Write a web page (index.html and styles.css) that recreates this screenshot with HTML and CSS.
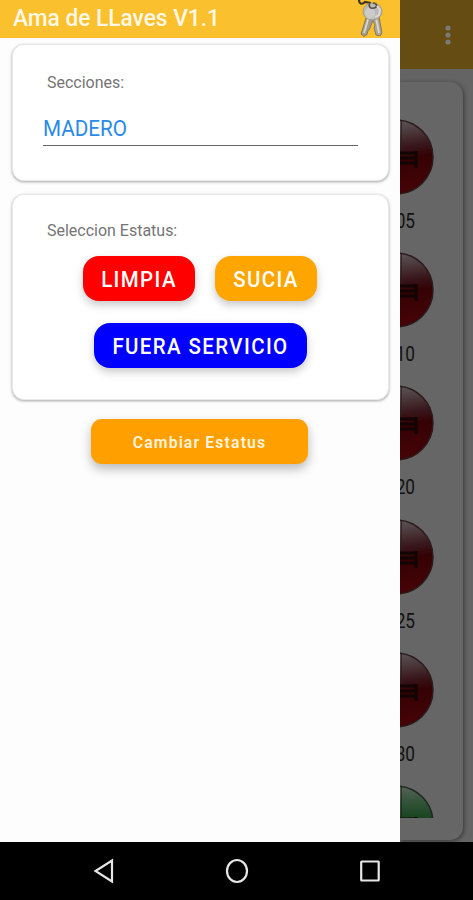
FILE: index.html
```html
<!DOCTYPE html>
<html lang="es">
<head>
    <meta charset="UTF-8">
    <meta name="viewport" content="width=device-width, initial-scale=1.0">
    <title>Ama de LLaves</title>
    <link rel="stylesheet" href="styles.css">
</head>
<body>
    <!-- Shared shapes for the room buttons -->
    <svg class="defs" width="0" height="0">
        <defs>
            <linearGradient id="red" x1="0" y1="0" x2="0.15" y2="1">
                <stop offset="0" stop-color="#686264"/>
                <stop offset="0.2" stop-color="#514245"/>
                <stop offset="0.45" stop-color="#38161a"/>
                <stop offset="0.6" stop-color="#340204"/>
                <stop offset="1" stop-color="#440306"/>
            </linearGradient>
            <linearGradient id="green" x1="0" y1="0" x2="0" y2="1">
                <stop offset="0" stop-color="#59625b"/>
                <stop offset="0.2" stop-color="#34553a"/>
                <stop offset="0.42" stop-color="#1a4422"/>
            </linearGradient>
            <g id="bed">
                <path d="M43.500 2v30" stroke="#2c2022" stroke-width="0.800"/>
                <path d="M24 34h35M24 39h33M24 44h35M58 32v17" stroke="#120304" stroke-width="3.200" fill="none"/>
            </g>
        </defs>
    </svg>

    <div class="screen">
        <div class="main">
            <div class="drawer">
                <div class="header">
                    <h1>Ama de LLaves V1.1</h1>
                    <svg class="keys" width="28" height="38" viewBox="0 0 28 38">
                        <path d="M1 0c0 4 3 5 6 2l6 1" fill="none" stroke="#3a3426" stroke-width="2.200"/>
                        <path d="M9 15L3 34l3 2.500 3-2 1-4 1.500-1 4-11z" fill="#a19c91" stroke="#7d6d46" stroke-width="0.800"/>
                        <path d="M15 16v5l2 4-1 3 2 7 4 1 2-3-3-17z" fill="#aaa59a" stroke="#7d6d46" stroke-width="0.800"/>
                        <path d="M10.500 18L6 33M18 18l3 15" stroke="#dcd9d0" stroke-width="1.800"/>
                        <ellipse cx="14.500" cy="11.500" rx="9.500" ry="8.500" fill="#bcbab8" stroke="#a39b86"/>
                        <ellipse cx="12" cy="13" rx="5" ry="6" fill="#cccbc9"/>
                        <path d="M12 3c-2 3 0 6 4 5 4-1 3-5-1-5" fill="none" stroke="#57503f" stroke-width="1.600"/>
                        <path d="M19 6l3 4-1 5-4 2" fill="none" stroke="#dddcd9" stroke-width="1.800"/>
                    </svg>
                </div>

                <div class="card section-card">
                    <label class="label">Secciones:</label>
                    <div class="select"><span>MADERO</span></div>
                </div>

                <div class="card status-card">
                    <label class="label">Seleccion Estatus:</label>
                    <div class="status-buttons">
                        <button class="status clean"><span>LIMPIA</span></button>
                        <button class="status dirty"><span>SUCIA</span></button>
                        <button class="status out"><span>FUERA SERVICIO</span></button>
                    </div>
                </div>

                <button class="change-btn"><span>Cambiar Estatus</span></button>
            </div>

            <!-- Dimmed page behind the drawer -->
            <div class="behind">
                <div class="toolbar">
                    <svg width="6" height="20" viewBox="0 0 6 20" fill="#7a7a78">
                        <circle cx="3" cy="3" r="2.600"/>
                        <circle cx="3" cy="10" r="2.600"/>
                        <circle cx="3" cy="17" r="2.600"/>
                    </svg>
                </div>
                <div class="room-card">
                    <div class="rooms">
                        <div class="room">
                            <svg width="76" height="76" viewBox="0 0 76 76"><circle cx="38" cy="38" r="37" fill="url(#red)" stroke="#2b1b1d" stroke-width="1.500"/><use href="#bed"/></svg>
                            <span>05</span>
                        </div>
                        <div class="room">
                            <svg width="76" height="76" viewBox="0 0 76 76"><circle cx="38" cy="38" r="37" fill="url(#red)" stroke="#2b1b1d" stroke-width="1.500"/><use href="#bed"/></svg>
                            <span>10</span>
                        </div>
                        <div class="room">
                            <svg width="76" height="76" viewBox="0 0 76 76"><circle cx="38" cy="38" r="37" fill="url(#red)" stroke="#2b1b1d" stroke-width="1.500"/><use href="#bed"/></svg>
                            <span>20</span>
                        </div>
                        <div class="room">
                            <svg width="76" height="76" viewBox="0 0 76 76"><circle cx="38" cy="38" r="37" fill="url(#red)" stroke="#2b1b1d" stroke-width="1.500"/><use href="#bed"/></svg>
                            <span>25</span>
                        </div>
                        <div class="room">
                            <svg width="76" height="76" viewBox="0 0 76 76"><circle cx="38" cy="38" r="37" fill="url(#red)" stroke="#2b1b1d" stroke-width="1.500"/><use href="#bed"/></svg>
                            <span>30</span>
                        </div>
                        <div class="room">
                            <svg width="76" height="76" viewBox="0 0 76 76"><circle cx="38" cy="38" r="37" fill="url(#green)" stroke="#1b2a1d" stroke-width="1.500"/><use href="#bed"/></svg>
                        </div>
                    </div>
                </div>
            </div>
        </div>

        <div class="navbar">
            <svg width="22" height="26" viewBox="0 0 22 26"><path d="M19 2.500v21L2.500 13z"/></svg>
            <svg width="24" height="26" viewBox="0 0 24 26"><ellipse cx="12" cy="13" rx="10" ry="11"/></svg>
            <svg width="22" height="26" viewBox="0 0 22 26"><rect x="2.200" y="3.500" width="17.500" height="19" rx="0.500"/></svg>
        </div>
    </div>
</body>
</html>
```
FILE: styles.css
```css
body {
    font-family: Roboto, sans-serif;
    background-color: #fdfdfd;
    margin: 0;
    padding: 0;
}

.defs {
    display: block;
}

.screen {
    display: flex;
    flex-direction: column;
    width: 473px;
    height: 900px;
    overflow: hidden;
}

.main {
    display: flex;
    height: 842px;
}

.drawer {
    width: 400px;
    height: 842px;
    background: #fdfdfd;
    display: flex;
    flex-direction: column;
}

.header {
    display: flex;
    justify-content: space-between;
    height: 38px;
    padding: 0 14px 0 13px;
    background: #fbc02d;
}

.header h1 {
    margin: 0;
    font-size: 24px;
    font-weight: 500;
    line-height: 37px;
    color: #fff8e6;
    white-space: nowrap;
    transform: scaleX(0.945);
    transform-origin: left;
}

.card {
    box-sizing: border-box;
    margin: 0 11px 0 12px;
    background: white;
    border: 1px solid #e9e9e9;
    border-radius: 12px;
    box-shadow: 0 1px 3px rgba(0, 0, 0, 0.35);
}

.section-card {
    height: 137px;
    margin-top: 6px;
    padding: 26px 30px 0;
}

.status-card {
    height: 206px;
    margin-top: 13px;
    padding: 24px 30px 0;
}

.label {
    display: block;
    margin-left: 4px;
    font-size: 17px;
    line-height: 22px;
    color: #757575;
    transform: scaleX(0.94);
    transform-origin: left;
}

.select {
    height: 32px;
    margin-top: 20px;
    border-bottom: 1px solid #666;
    color: #2b8ae8;
    font-size: 22px;
    line-height: 32px;
}

.select span {
    display: inline-block;
    transform: scaleX(0.94);
    transform-origin: left;
}

.status-buttons {
    display: flex;
    flex-wrap: wrap;
    justify-content: center;
    gap: 22px 20px;
    margin: 15px 1px 0 0;
}

button {
    border: none;
    padding: 0;
    font-family: inherit;
    color: white;
    cursor: pointer;
}

button span {
    display: block;
    white-space: nowrap;
    transform: scaleX(0.93);
}

.status {
    height: 45px;
    border-radius: 16px;
    font-size: 22px;
    font-weight: 500;
    letter-spacing: 1.500px;
    box-shadow: 0 4px 9px rgba(0, 0, 0, 0.22);
}

.status span {
    padding-top: 2px;
}

.clean {
    width: 112px;
    background: #ff0000;
}

.dirty {
    width: 102px;
    background: #ffa500;
}

.out {
    width: 213px;
    background: #0000ff;
}

.change-btn {
    width: 217px;
    height: 45px;
    margin: 19px 0 0 91px;
    border-radius: 11px;
    background: #ffa000;
    color: #fff3dc;
    font-size: 17px;
    font-weight: 600;
    letter-spacing: 1.200px;
    box-shadow: 0 5px 11px rgba(0, 0, 0, 0.27);
}

.behind {
    width: 73px;
    height: 842px;
    background: #646464;
    overflow: hidden;
}

.toolbar {
    box-sizing: border-box;
    height: 69px;
    padding: 25px 0 0 45px;
    background: #644c12;
}

.room-card {
    box-sizing: border-box;
    width: 63px;
    height: 758px;
    margin-top: 13px;
    padding-top: 37px;
    background: #666;
    border-radius: 0 13px 13px 0;
    box-shadow: 1px 1px 4px rgba(0, 0, 0, 0.45);
}

.rooms {
    height: 699px;
    overflow: hidden;
}

.room {
    height: 133.200px;
}

.room svg {
    display: block;
    margin-left: -42px;
}

.room span {
    display: flex;
    justify-content: flex-end;
    width: 15px;
    margin-top: 14px;
    font-size: 20px;
    line-height: 24px;
    color: #111;
    transform: scaleX(0.86);
    transform-origin: right;
}

.navbar {
    box-sizing: border-box;
    display: flex;
    justify-content: space-between;
    height: 58px;
    padding: 16px 92px 0 93px;
    background: #000;
}

.navbar svg {
    fill: none;
    stroke: #e6e6e6;
    stroke-width: 2.200;
}
```
